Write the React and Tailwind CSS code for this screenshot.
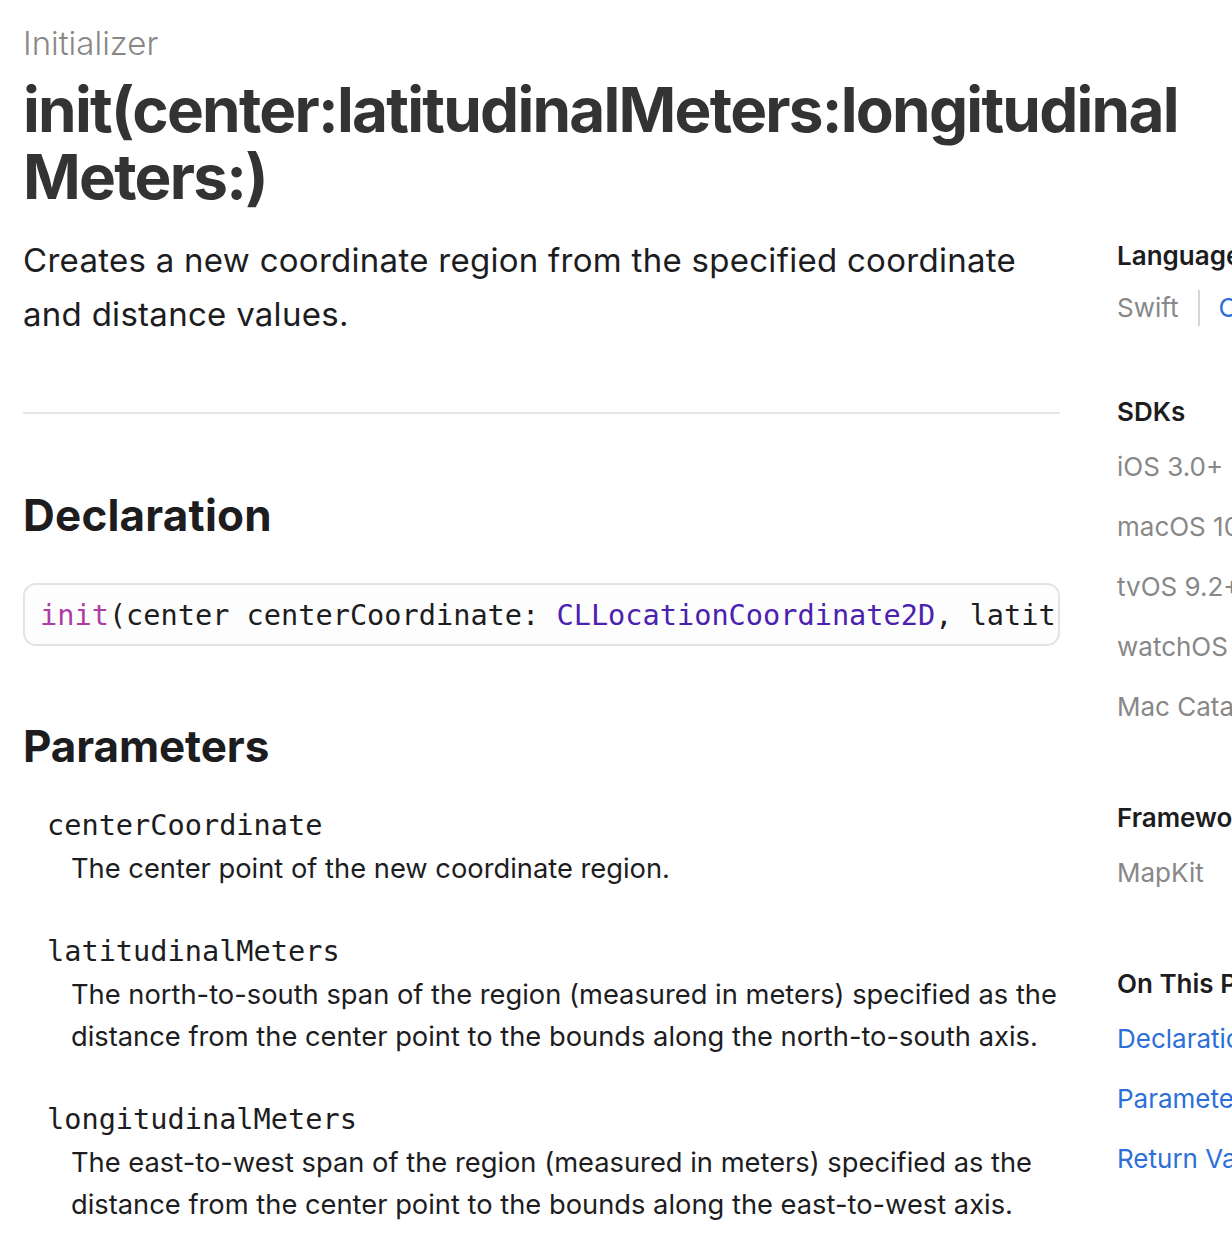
import React from "react";

const sans = { fontFamily: "Inter, 'Noto Sans', sans-serif" };

function SideHead({ children, className = "" }) {
  return (
    <div className={"text-[26px] leading-[34px] font-semibold text-[#1d1d1f] whitespace-nowrap " + className}>
      {children}
    </div>
  );
}

function SideItem({ children, className = "" }) {
  return (
    <div className={"text-[26px] leading-[60px] whitespace-nowrap " + className}>{children}</div>
  );
}

function Param({ name, lines, className = "" }) {
  return (
    <div className={className}>
      <div className="pl-[24px] font-['DejaVu_Sans_Mono',monospace] text-[28.6px] leading-[42px] text-[#1d1d1f] whitespace-nowrap">
        {name}
      </div>
      <div className="mt-[2px] pl-[48px] text-[27.3px] leading-[42px] text-[#1d1d1f]">
        {lines.map((l, i) => (
          <div key={i} className="whitespace-nowrap">{l}</div>
        ))}
      </div>
    </div>
  );
}

export default function App() {
  return (
    <div
      className="w-[1232px] h-[1236px] overflow-hidden bg-white pl-[23px] pt-[23px] font-['Inter',sans-serif]"
      style={sans}
    >
      <div className="text-[33px] leading-[40px] font-light text-[#888888]">Initializer</div>
      <h1 className="mt-[13px] text-[62px] leading-[67px] font-bold text-[#333333] tracking-[-1.75px] w-[1200px] whitespace-nowrap">
        init(center:latitudinalMeters:longitudinal
        <br />
        Meters:)
      </h1>

      <div className="flex mt-[23px]">
        <main className="w-[1037px] shrink-0">
          <p className="text-[33px] leading-[54px] tracking-[0.28px] text-[#1d1d1f] whitespace-nowrap">
            Creates a new coordinate region from the specified coordinate
            <br />
            and distance values.
          </p>
          <div className="mt-[71px] h-[2px] bg-[#e6e6e6]" />

          <h2 className="mt-[71px] text-[44px] leading-[60px] font-bold tracking-[0.2px] text-[#1d1d1f]">Declaration</h2>
          <div className="mt-[38px] h-[63px] rounded-[13px] border-2 border-[#e3e3e3] bg-[#fdfdfd] overflow-hidden flex items-center pl-[15px]">
            <code className="font-['DejaVu_Sans_Mono',monospace] text-[28.6px] leading-[40px] text-[#1d1d1f] whitespace-nowrap">
              <span className="text-[#ad3da4]">init</span>(center centerCoordinate:{" "}
              <span className="text-[#4b21b0]">CLLocationCoordinate2D</span>, latitudinalMeters: CLLocationDistance, longitudinalMeters: CLLocationDistance)
            </code>
          </div>

          <h2 className="mt-[70px] text-[44px] leading-[60px] font-bold tracking-[-0.1px] text-[#1d1d1f]">Parameters</h2>

          <Param
            className="mt-[28px]"
            name="centerCoordinate"
            lines={["The center point of the new coordinate region."]}
          />
          <Param
            className="mt-[40px]"
            name="latitudinalMeters"
            lines={[
              "The north-to-south span of the region (measured in meters) specified as the",
              "distance from the center point to the bounds along the north-to-south axis.",
            ]}
          />
          <Param
            className="mt-[40px]"
            name="longitudinalMeters"
            lines={[
              "The east-to-west span of the region (measured in meters) specified as the",
              "distance from the center point to the bounds along the east-to-west axis.",
            ]}
          />
        </main>

        <aside className="ml-[57px] mt-[6px] w-[300px] shrink-0">
          <SideHead>Language</SideHead>
          <div className="mt-[5px] flex items-center text-[26px] leading-[60px] whitespace-nowrap">
            <span className="text-[#888888]">Swift</span>
            <span className="mx-[19px] w-[2px] h-[36px] bg-[#d6d6d6]" />
            <span className="text-[#2d6fd9]">Objective-C</span>
          </div>

          <SideHead className="mt-[57px]">SDKs</SideHead>
          <div className="mt-[8px] text-[#888888]">
            <SideItem>iOS 3.0+</SideItem>
            <SideItem>macOS 10.9+</SideItem>
            <SideItem>tvOS 9.2+</SideItem>
            <SideItem>watchOS 2.0+</SideItem>
            <SideItem>Mac Catalyst 13.0+</SideItem>
          </div>

          <SideHead className="mt-[64px]">Framework</SideHead>
          <div className="mt-[8px] text-[#888888]">
            <SideItem>MapKit</SideItem>
          </div>

          <SideHead className="mt-[64px]">On This Page</SideHead>
          <div className="mt-[8px] text-[#2d6fd9]">
            <SideItem>Declaration</SideItem>
            <SideItem>Parameters</SideItem>
            <SideItem>Return Value</SideItem>
          </div>
        </aside>
      </div>
    </div>
  );
}
